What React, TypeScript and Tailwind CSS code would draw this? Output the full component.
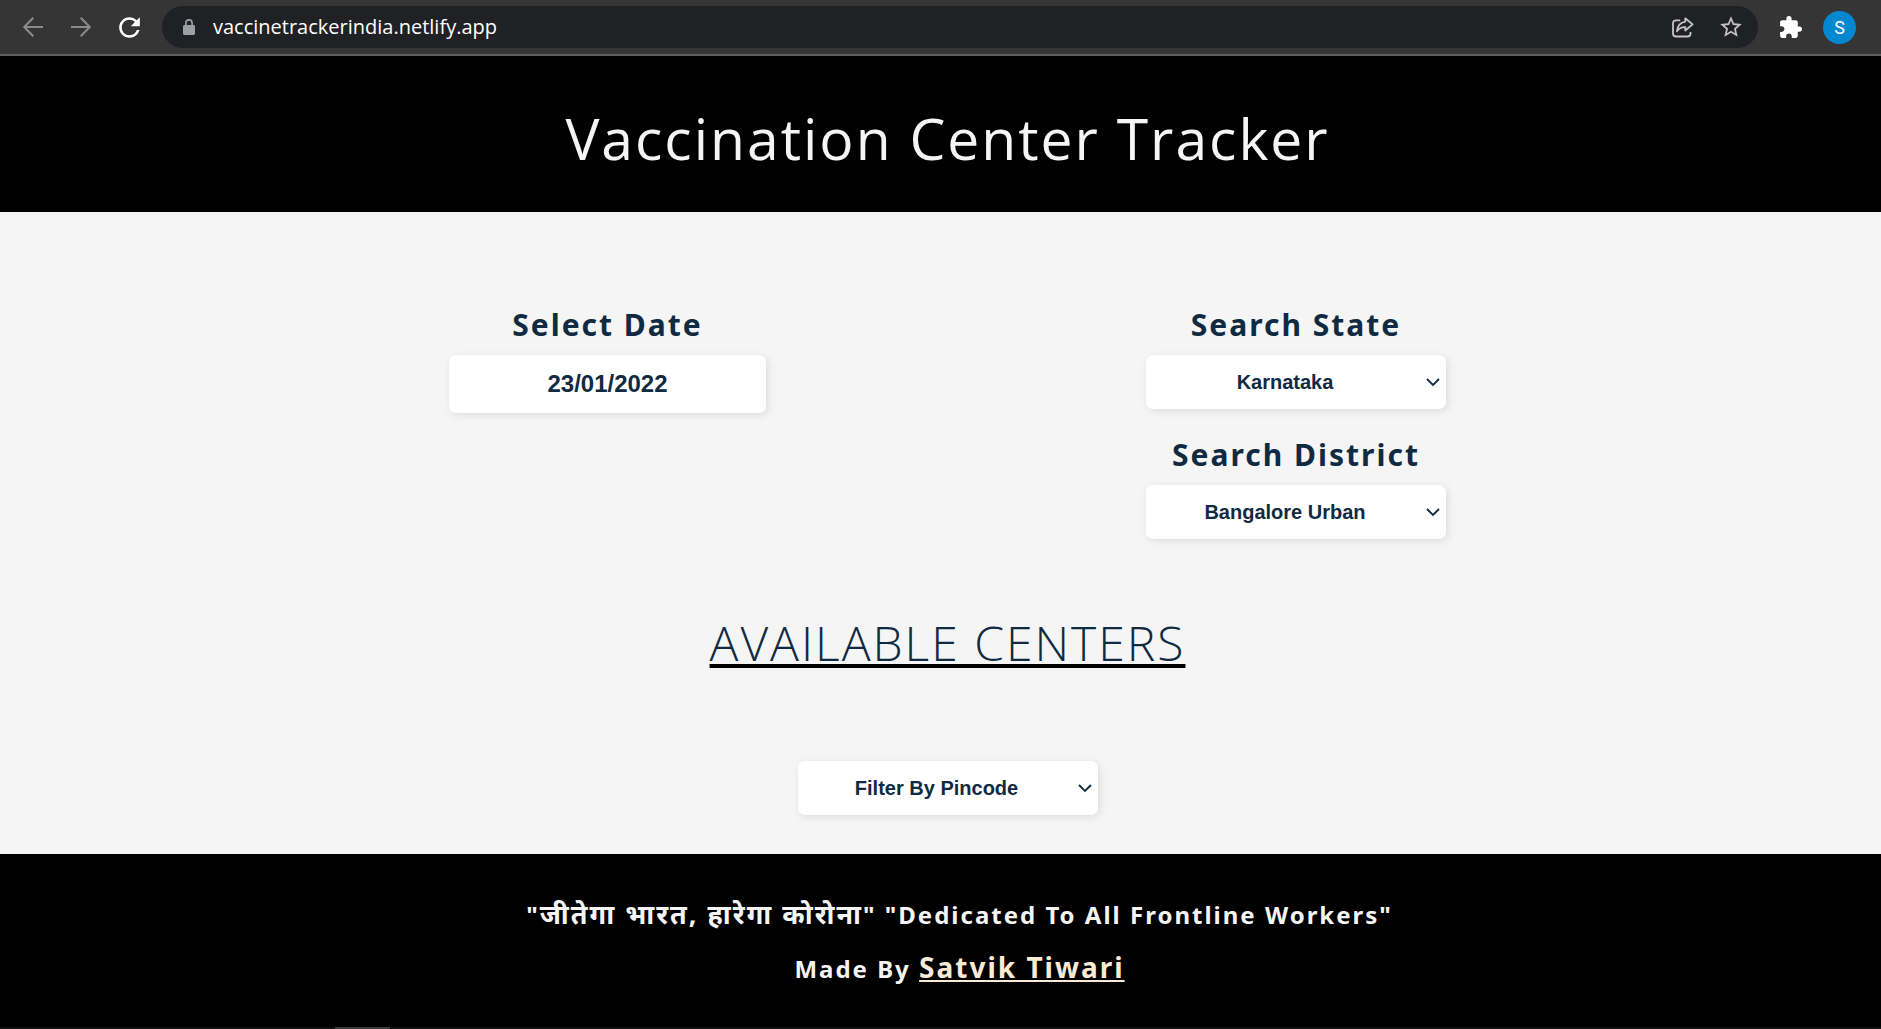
import React, { useState } from "react";
import { MdExtension, MdRefresh, MdStarBorder } from "react-icons/md";

function ArrowIcon({ flip = false }: { flip?: boolean }) {
  return (
    <svg
      viewBox="0 0 22 22"
      className={flip ? "size-[22px] rotate-180" : "size-[22px]"}
      fill="none"
      stroke="currentColor"
      strokeWidth="2"
      aria-hidden="true"
    >
      <path d="M21 11H2.5M11.3 1.8L2.2 11l9.1 9.2" />
    </svg>
  );
}

function LockIcon() {
  return (
    <svg viewBox="0 0 12 16" className="h-4 w-3" aria-hidden="true">
      <rect y="6" width="12" height="10" rx="1.4" fill="#9aa0a6" />
      <path d="M2.9 6.5V4a3.1 3.1 0 0 1 6.2 0v2.5" fill="none" stroke="#9aa0a6" strokeWidth="1.7" />
    </svg>
  );
}

function ShareIcon() {
  return (
    <svg
      viewBox="0 0 22 21"
      className="h-[21px] w-[22px]"
      fill="none"
      stroke="currentColor"
      strokeWidth="1.8"
      strokeLinejoin="round"
      aria-hidden="true"
    >
      <path d="M8.2 3.3H4A3 3 0 0 0 1 6.3V16.500a3 3 0 0 0 3 3h11.500a3 3 0 0 0 3-3V15" />
      <path d="M13.300 1.300L20.600 7.400l-7.300 6.100V10.200C9.500 10 6.900 11.500 5 14.300 5.400 9.600 8.200 5.500 13.300 4.700z" />
    </svg>
  );
}

function BrowserBar() {
  return (
    <nav
      aria-label="Browser"
      className="flex h-14 items-center border-b-2 border-[#5f5f5f] bg-[#353535] pl-[22px] pr-[25px]"
    >
      <button aria-label="Back" className="text-[#8b8b8b]">
        <ArrowIcon />
      </button>
      <button aria-label="Forward" className="ml-[26px] text-[#8b8b8b]">
        <ArrowIcon flip />
      </button>
      <button aria-label="Reload" className="ml-[22px] text-white">
        <MdRefresh className="size-[31px]" />
      </button>
      <div className="ml-[17px] flex h-[42px] flex-1 items-center rounded-full bg-[#202124] pl-[21px] pr-[14px] text-[#c4c4c4]">
        <LockIcon />
        <input
          aria-label="Address"
          defaultValue="vaccinetrackerindia.netlify.app"
          className="ml-[18px] min-w-0 flex-1 bg-transparent font-['Open_Sans',sans-serif] text-[20px] text-white outline-none"
        />
        <button aria-label="Share">
          <ShareIcon />
        </button>
        <button aria-label="Bookmark" className="ml-6">
          <MdStarBorder className="size-[26px]" />
        </button>
      </div>
      <button aria-label="Extensions" className="ml-5 text-white">
        <MdExtension className="size-[25px]" />
      </button>
      <button
        aria-label="Profile"
        className="ml-5 flex size-[33px] items-center justify-center rounded-full bg-[#0288d1] font-[Roboto,sans-serif] text-[18px] text-white"
      >
        S
      </button>
    </nav>
  );
}

const CONTROL =
  "rounded-[7px] bg-white text-center font-['Liberation_Sans',Arial,sans-serif] font-bold text-[#102a42] shadow-[2px_2px_8px_rgba(0,0,0,0.1)] outline-none";
const LABEL = "mb-2 text-[30px] leading-[44px] font-bold tracking-[2px]";

function Select({
  id,
  label,
  options,
}: {
  id: string;
  label?: string;
  options: string[];
}) {
  return (
    <div className="relative">
      <select
        id={id}
        aria-label={label}
        className={`${CONTROL} h-[54px] w-[300px] appearance-none pr-[22px] text-[20px]`}
      >
        {options.map((o) => (
          <option key={o}>{o}</option>
        ))}
      </select>
      <svg
        viewBox="0 0 14 9"
        className="pointer-events-none absolute top-[23px] right-[6px] h-[9px] w-[14px]"
        fill="none"
        stroke="#102a42"
        strokeWidth="1.8"
        aria-hidden="true"
      >
        <path d="M1 1l6 6 6-6" />
      </svg>
    </div>
  );
}

export default function App() {
  const [date, setDate] = useState("23/01/2022");
  return (
    <div className="flex min-h-screen flex-col bg-black font-['Noto_Sans','Open_Sans',sans-serif]">
      <BrowserBar />
      <header className="bg-black pt-[42px] pb-[34px] pl-[14px] text-center">
        <h1 className="font-['Open_Sans',sans-serif] text-[57px] leading-[80px] tracking-[2px] text-[#f5f5f5]">
          Vaccination Center Tracker
        </h1>
      </header>
      <main className="flex flex-col items-center bg-[#f5f5f5] pt-[91px] pb-[39px] pl-[14px] text-[#102a42]">
        <div className="flex flex-wrap items-start justify-center gap-x-95 gap-y-6">
          <div className="flex flex-col items-center">
            <label htmlFor="date" className={LABEL}>
              Select Date
            </label>
            <input
              id="date"
              value={date}
              onChange={(e) => setDate(e.target.value)}
              className={`${CONTROL} h-[58px] w-[317px] text-[24px]`}
            />
          </div>
          <div className="flex flex-col items-center">
            <label htmlFor="state" className={LABEL}>
              Search State
            </label>
            <Select id="state" options={["Karnataka"]} />
            <label htmlFor="district" className={`${LABEL} mt-6`}>
              Search District
            </label>
            <Select id="district" options={["Bangalore Urban"]} />
          </div>
        </div>
        <h2 className="mt-[74px] mb-[88px] font-['Open_Sans',sans-serif] text-[48px] leading-[60px] font-light tracking-[2px] underline decoration-black decoration-4 underline-offset-[3px] [text-decoration-skip-ink:none]">
          AVAILABLE CENTERS
        </h2>
        <Select id="pincode" label="Filter By Pincode" options={["Filter By Pincode"]} />
      </main>
      <footer className="flex-1 bg-black pt-[34px] pb-6 pl-[38px] text-center text-[24px] leading-[52px] font-bold tracking-[2px] text-[#f5f5f5]">
        <p>
          "<span lang="hi" className="text-[27px]">जीतेगा भारत, हारेगा कोरोना</span>" "Dedicated To All
          Frontline Workers"
        </p>
        <p>
          Made By{" "}
          <a
            href="#"
            className="text-[28px] text-[#faebd7] underline decoration-2 underline-offset-2"
          >
            Satvik Tiwari
          </a>
        </p>
      </footer>
      <div className="h-[2px] bg-[#110e0f] pl-[335px]">
        <div className="h-[2px] w-[55px] bg-[#3a3a3a]" />
      </div>
    </div>
  );
}
